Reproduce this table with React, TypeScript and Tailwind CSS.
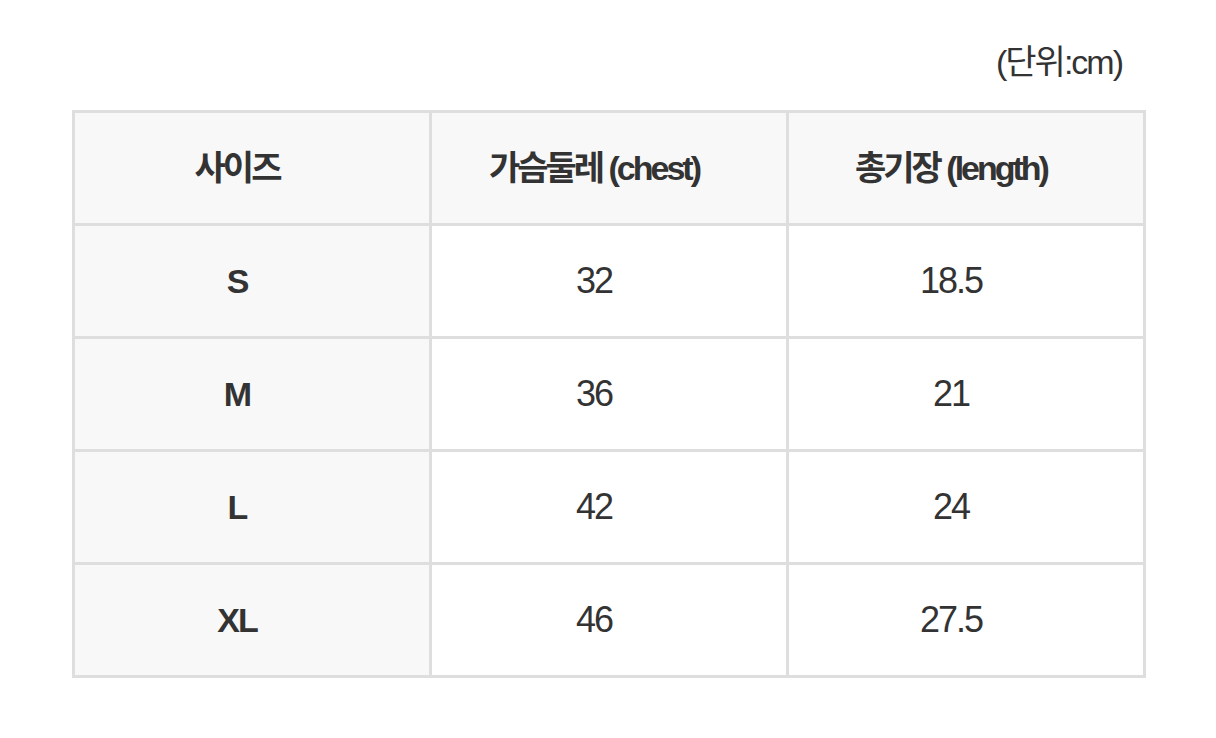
import React from 'react';

const rows = [
  { size: 'S', chest: '32', length: '18.5' },
  { size: 'M', chest: '36', length: '21' },
  { size: 'L', chest: '42', length: '24' },
  { size: 'XL', chest: '46', length: '27.5' },
];

const cell = 'border-[3px] border-[#dedede] text-center align-middle pr-[30px]';

const App: React.FC = () => {
  return (
    <div
      className="w-[1216px] h-[738px] bg-white text-[#333333] pt-[39px] pl-[72px]"
      style={{ fontFamily: '"Liberation Sans", "Noto Sans CJK KR", sans-serif' }}
    >
      {/* Unit label */}
      <div className="w-[1074px] h-[71px] text-right pr-[24px] text-[34px] leading-[46px] tracking-[-2px]">
        (단위:cm)
      </div>

      {/* Size table */}
      <table className="w-[1074px] border-collapse table-fixed">
        <thead>
          <tr className="h-[113px] bg-[#f8f8f8]">
            <th className={`${cell} font-semibold text-[34px] tracking-[-3px]`}>사이즈</th>
            <th className={`${cell} font-semibold text-[34px] tracking-[-3px]`}>가슴둘레 (chest)</th>
            <th className={`${cell} font-semibold text-[34px] tracking-[-3px]`}>총기장 (length)</th>
          </tr>
        </thead>
        <tbody>
          {rows.map(row => (
            <tr key={row.size} className="h-[113px]">
              <td className={`${cell} bg-[#f8f8f8] font-bold text-[34px] tracking-[-2px]`}>{row.size}</td>
              <td className={`${cell} bg-white text-[36px] tracking-[-2px]`}>{row.chest}</td>
              <td className={`${cell} bg-white text-[36px] tracking-[-2px]`}>{row.length}</td>
            </tr>
          ))}
        </tbody>
      </table>
    </div>
  );
};

export default App;
